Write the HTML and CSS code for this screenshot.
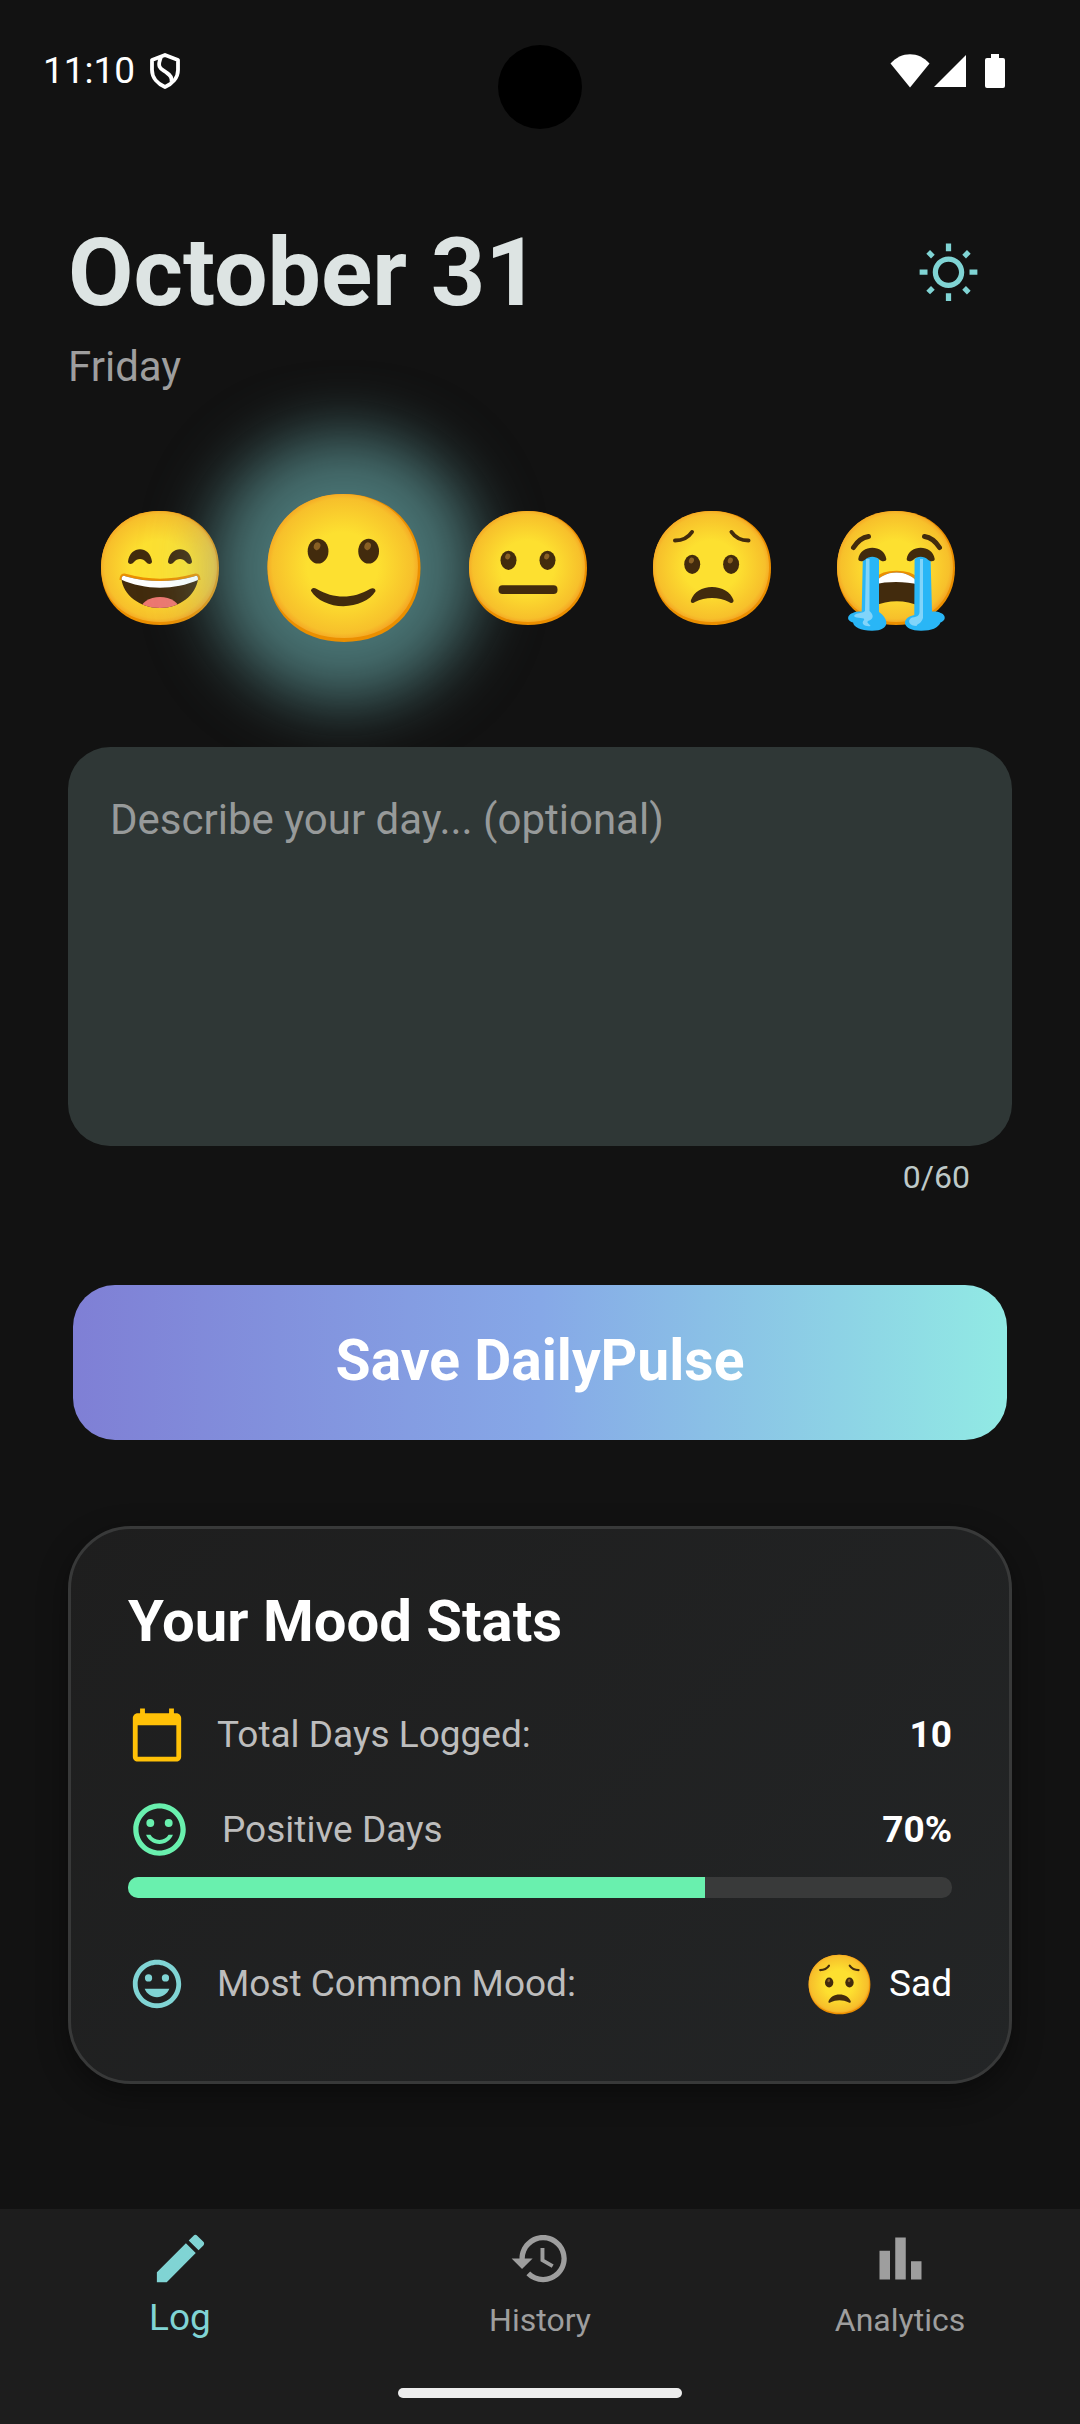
FILE: index.html
```html
<!DOCTYPE html>
<html lang="en">
<head>
<meta charset="utf-8">
<meta name="viewport" content="width=device-width, initial-scale=1">
<title>DailyPulse</title>
<link rel="stylesheet" href="styles.css">
</head>
<body>
<svg class="defs" aria-hidden="true">
  <defs>
    <radialGradient id="skin" cx="0.5" cy="0.5" r="0.52">
      <stop offset="0.45" stop-color="#fde030"/>
      <stop offset="0.9" stop-color="#f7c02b"/>
      <stop offset="1" stop-color="#f4a223"/>
    </radialGradient>
    <g id="head">
      <path fill="#eb8f00" d="M0-57C34-57 59-34 59 0S35 57 0 57S-59 34-59 0S-34-57 0-57z"/>
      <path fill="url(#skin)" d="M-1-57C32-57 57-34 57-1S34 54 0 54S-59 32-59-1S-34-57-1-57z"/>
    </g>
    <g id="eye">
      <ellipse rx="8" ry="9.6" fill="#422b0d"/>
      <ellipse cx="-2" cy="-3.3" rx="2.5" ry="3" fill="#896024" transform="rotate(20)"/>
    </g>
    <path id="arch" fill="#422b0d" d="M-12 5.5C-10-11 10-11 12 5.5C12 8.5 8 8.8 6 6C3 2 -3 2 -6 6C-8 8.8 -12 8.5 -12 5.5z"/>
    <clipPath id="laugh"><path d="M-38.5 11C-38 7 -36 7.500 -34 8.500C-12 14.500 12 14.500 34 8.500C36 7.500 38 7 38 11C36 27 20 40 0 40C-20 40 -37 27 -38.500 11z"/></clipPath>
    <clipPath id="wail"><path d="M-22 18C-16 0 17 0 23 18L23 38C10 31.500 -8 31.500 -22 38z"/></clipPath>
    <symbol id="mood-great" viewBox="-64 -64 128 128">
      <use href="#head"/>
      <use href="#arch" x="-20" y="-12"/>
      <use href="#arch" x="20" y="-12"/>
      <path fill="none" stroke="#eb8f00" stroke-width="5" stroke-linejoin="round" d="M-38 12C-38 7.500 -36 7.500 -34 8.500C-12 14.500 12 14.500 34 8.500C36 7.500 38 7.500 38 12"/>
      <g clip-path="url(#laugh)">
        <rect x="-40" y="4" width="80" height="40" fill="#422b0d"/>
        <ellipse cy="43" rx="20" ry="14" fill="#ed7770"/>
        <path fill="#fff" d="M-40 4H40V11C16 22.500 -16 22.500 -40 11z"/>
      </g>
    </symbol>
    <symbol id="mood-good" viewBox="-64 -64 128 128">
      <use href="#head"/>
      <use href="#eye" x="-20" y="-13"/>
      <use href="#eye" x="19" y="-13"/>
      <path fill="#422b0d" d="M-25.500 17.500C-25 15 -23 15 -21 16.200C-8 24 7 24 20 16.200C22 15 24.500 15.500 24.300 18C20 25 10 29.400 -.5 29.400S-21 25 -25.500 17.500z"/>
    </symbol>
    <symbol id="mood-okay" viewBox="-64 -64 128 128">
      <use href="#head"/>
      <use href="#eye" x="-19.500" y="-7.700"/>
      <use href="#eye" x="19.500" y="-7.700"/>
      <rect x="-29.500" y="17.300" width="59" height="8.800" rx="4" fill="#422b0d"/>
    </symbol>
    <symbol id="mood-sad" viewBox="-64 -64 128 128">
      <use href="#head"/>
      <path fill="none" stroke="#422b0d" stroke-width="4" stroke-linecap="round" d="M-37-27.500C-29.500 -27.500 -24 -30 -20-36M36.500-27.500C29-27.500 23.500-30 19.500-36"/>
      <use href="#eye" x="-19.800" y="-3.700"/>
      <use href="#eye" x="19.100" y="-3.700"/>
      <path fill="#422b0d" d="M-21 32C-18 24 -10 19 0 19S18.500 24 21.500 32C22 35 19 36 17 34C7 28.700 -7 28.700 -17 34C-19 36 -22 35 -21 32z"/>
    </symbol>
    <symbol id="mood-awful" viewBox="-64 -64 128 128">
      <use href="#head"/>
      <path fill="none" stroke="#422b0d" stroke-width="5" stroke-linecap="round" d="M-42.500-20.500C-39-26 -34-30.500 -27.500-31.500M43.500-20.500C40-26 35-30.500 28.500-31.500"/>
      <path fill="none" stroke="#eb8f00" stroke-width="3" d="M-20 11C-12 2 13 2 21 11"/>
      <g clip-path="url(#wail)">
        <rect x="-24" y="0" width="48" height="40" fill="#422b0d"/>
        <path fill="#fff" d="M-24 0H24V17C10 13 -10 13 -24 17z"/>
      </g>
      <path fill="#29b6f6" d="M-33.200-9Q-25-16 -17-9V44C-8 50 -4 62.700 -24 62.700C-36 62.700 -42 59 -43 54.500C-52 52 -48 43 -34.300 43.500z"/>
      <path fill="#29b6f6" d="M18.600-9Q26-16 34.600-9L36 43.500C50 43 52 52 44.500 54.500C42 60 36 62.700 25 62.700C6 62.700 4 50 18.300 47z"/>
      <path fill="#81d4fa" d="M-30-9H-26.500V43C-22 47 -22 51 -28 53C-30 55 -26 56 -25.500 58C-30 59 -36 56 -32 52C-30 49 -40 51 -42 48C-40 44 -34 46 -31 43zM24-9H27V50C25 56 22 55 20.500 58C14 58 10 53 16 49.500C22 49 24 47 23.500 42z"/>
      <use href="#arch" transform="translate(-23.700 -14) scale(1.170 .9)"/>
      <use href="#arch" transform="translate(24.700 -14) scale(1.170 .9)"/>
    </symbol>
  </defs>
</svg>

<header class="status">
  <div class="status-group">
    <time>11:10</time>
    <svg class="shield" viewBox="0 0 30 36" fill="none" stroke="#fff" stroke-width="3.800" stroke-linejoin="round" aria-hidden="true">
      <path d="M15 2L28 7V17C28 25 22 31 15 34C8 31 2 25 2 17V7z"/>
      <path d="M11 4C6 16 12 16 17 20C22 23 22 26 21.500 29"/>
    </svg>
  </div>
  <span class="camera"></span>
  <div class="status-group status-icons">
    <svg width="40" height="34" viewBox="0 0 40 34" fill="#fff" aria-hidden="true"><path d="M20 33.500L.5 9.500C11-3 29-3 39.500 9.500z"/></svg>
    <svg width="32" height="34" viewBox="0 0 32 34" fill="#fff" aria-hidden="true"><path d="M32 1V33H0z"/></svg>
    <svg class="battery" width="20" height="34" viewBox="0 0 20 34" fill="#fff" aria-hidden="true"><path d="M6 0h8v4h4q2 0 2 2v26q0 2-2 2H2q-2 0-2-2V6q0-2 2-2h4z"/></svg>
  </div>
</header>

<main class="page">
  <div class="heading">
    <div>
      <h1>October 31</h1>
      <p class="weekday">Friday</p>
    </div>
    <button class="theme" type="button" aria-label="Switch theme">
      <svg class="icon-lg" viewBox="0 0 24 24" fill="currentColor"><path d="M6.760 4.840l-1.800-1.790-1.410 1.410 1.790 1.790 1.420-1.410zM4 10.500H1v2h3v-2zm9-9.950h-2V3.500h2V.55zm7.450 3.910l-1.410-1.410-1.790 1.790 1.410 1.410 1.790-1.790zm-3.210 13.700l1.790 1.800 1.410-1.410-1.800-1.790-1.400 1.400zM20 10.500v2h3v-2h-3zm-8-5c-3.310 0-6 2.690-6 6s2.690 6 6 6 6-2.690 6-6-2.690-6-6-6zm0 10c-2.210 0-4-1.790-4-4s1.790-4 4-4 4 1.790 4 4-1.790 4-4 4zm-1 6.950h2V19.500h-2v2.950zm-7.450-3.910l1.410 1.410 1.790-1.800-1.410-1.410-1.790 1.800z"/></svg>
    </button>
  </div>

  <div class="moods">
    <button class="mood" type="button" aria-label="Great"><svg viewBox="0 0 128 128"><use href="#mood-great"/></svg></button>
    <button class="mood mood-selected" type="button" aria-label="Good" aria-pressed="true"><svg viewBox="0 0 128 128"><use href="#mood-good"/></svg></button>
    <button class="mood" type="button" aria-label="Okay"><svg viewBox="0 0 128 128"><use href="#mood-okay"/></svg></button>
    <button class="mood" type="button" aria-label="Sad"><svg viewBox="0 0 128 128"><use href="#mood-sad"/></svg></button>
    <button class="mood" type="button" aria-label="Awful"><svg viewBox="0 0 128 128"><use href="#mood-awful"/></svg></button>
  </div>

  <textarea class="note" maxlength="60" aria-label="Describe your day" placeholder="Describe your day... (optional)"></textarea>
  <p class="counter">0/60</p>

  <button class="save" type="button">Save DailyPulse</button>

  <section class="card">
    <h2>Your Mood Stats</h2>
    <div class="stat">
      <svg class="icon-md amber" viewBox="0 0 24 24" fill="currentColor" aria-hidden="true"><path d="M20 3h-1V1h-2v2H7V1H5v2H4c-1.100 0-2 .9-2 2v16c0 1.100.9 2 2 2h16c1.100 0 2-.9 2-2V5c0-1.100-.9-2-2-2zm0 18H4V8h16v13z"/></svg>
      <span class="stat-label">Total Days Logged:</span>
      <strong>10</strong>
    </div>
    <div class="stat stat-positive">
      <svg class="icon-lg green" viewBox="0 0 24 24" fill="currentColor" aria-hidden="true"><circle cx="15.500" cy="9.500" r="1.500"/><circle cx="8.500" cy="9.500" r="1.500"/><path d="M12 16c-1.480 0-2.750-.81-3.450-2H6.880c.8 2.050 2.790 3.500 5.120 3.500s4.320-1.450 5.120-3.500h-1.670c-.7 1.190-1.970 2-3.450 2zm-.01-14C6.470 2 2 6.480 2 12s4.470 10 9.990 10C17.520 22 22 17.520 22 12S17.520 2 11.990 2zM12 20c-4.420 0-8-3.580-8-8s3.580-8 8-8 8 3.580 8 8-3.580 8-8 8z"/></svg>
      <span class="stat-label">Positive Days</span>
      <strong>70%</strong>
    </div>
    <div class="meter" role="progressbar" aria-label="Positive days" aria-valuemin="0" aria-valuemax="100" aria-valuenow="70"><div class="meter-fill" style="width: 70%"></div></div>
    <div class="stat stat-common">
      <svg class="icon-md teal" viewBox="0 0 24 24" fill="currentColor" aria-hidden="true"><circle cx="15.500" cy="9.500" r="1.500"/><circle cx="8.500" cy="9.500" r="1.500"/><path d="M11.990 2C6.470 2 2 6.480 2 12s4.470 10 9.990 10C17.520 22 22 17.520 22 12S17.520 2 11.990 2zM12 20c-4.420 0-8-3.580-8-8s3.580-8 8-8 8 3.580 8 8-3.580 8-8 8zM12 17.500c2.330 0 4.310-1.460 5.110-3.500H6.890c.8 2.040 2.780 3.500 5.110 3.500z"/></svg>
      <span class="stat-label">Most Common Mood:</span>
      <svg class="mood-mini" viewBox="0 0 128 128" aria-hidden="true"><use href="#mood-sad"/></svg>
      <span class="mood-name">Sad</span>
    </div>
  </section>
</main>

<nav class="tabs">
  <a class="tab tab-active" href="#log" aria-current="page">
    <svg class="icon-lg" viewBox="0 0 24 24" fill="currentColor" aria-hidden="true"><path d="M3 17.250V21h3.750L17.810 9.940l-3.750-3.750L3 17.250zM20.710 7.040c.39-.39.39-1.020 0-1.410l-2.340-2.340c-.39-.39-1.020-.39-1.410 0l-1.830 1.830 3.750 3.750 1.830-1.830z"/></svg>
    <span>Log</span>
  </a>
  <a class="tab" href="#history">
    <svg class="icon-lg" viewBox="0 0 24 24" fill="currentColor" aria-hidden="true"><path d="M13 3c-4.970 0-9 4.030-9 9H1l3.890 3.890.07.14L9 12H6c0-3.870 3.130-7 7-7s7 3.130 7 7-3.130 7-7 7c-1.930 0-3.680-.79-4.940-2.060l-1.420 1.420C8.270 19.990 10.510 21 13 21c4.970 0 9-4.030 9-9s-4.030-9-9-9zm-1 5v5l4.280 2.540.72-1.210-3.500-2.080V8H12z"/></svg>
    <span>History</span>
  </a>
  <a class="tab" href="#analytics">
    <svg class="icon-lg" viewBox="0 0 24 24" fill="currentColor" aria-hidden="true"><path d="M4 9h4v11H4zm12 4h4v7h-4zm-6-9h4v16h-4z"/></svg>
    <span>Analytics</span>
  </a>
</nav>
<div class="gesture"><span></span></div>
</body>
</html>
```
FILE: styles.css
```css
* {
  box-sizing: border-box;
}

body {
  margin: 0;
  min-height: 100vh;
  display: flex;
  flex-direction: column;
  background: #121212;
  color: #fff;
  font-family: Roboto, "Liberation Sans", sans-serif;
  font-size: 37px;
  line-height: 44px;
}

h1,
h2,
p {
  margin: 0;
}

button {
  padding: 0;
  border: 0;
  background: none;
  color: inherit;
  font: inherit;
}

svg {
  display: block;
  flex: none;
}

.defs {
  position: absolute;
  width: 0;
  height: 0;
}

.icon-md {
  width: 58px;
  height: 58px;
}

.icon-lg {
  width: 63px;
  height: 63px;
}

.amber {
  color: #ffc107;
}

.green {
  color: #69f0ae;
}

.teal {
  color: #80d4d4;
}

/* System status bar */
.status {
  position: relative;
  display: flex;
  justify-content: space-between;
  align-items: center;
  height: 142px;
  padding: 0 75px 0 43px;
}

.status-group {
  display: flex;
  align-items: center;
  gap: 15px;
}

.status-icons {
  gap: 4px;
}

.battery {
  margin-left: 15px;
}

.shield {
  width: 30px;
  height: 36px;
}

.camera {
  position: absolute;
  top: 45px;
  left: 50%;
  width: 84px;
  height: 84px;
  margin-left: -42px;
  border-radius: 50%;
  background: #000;
}

/* Page content */
.page {
  display: flex;
  flex-direction: column;
  padding: 76px 68px;
}

.heading {
  display: flex;
  justify-content: space-between;
  align-items: flex-start;
}

h1 {
  color: #dde4e3;
  font-size: 95px;
  line-height: 110px;
}

.weekday {
  margin-top: 14px;
  color: #9e9e9e;
  font-size: 42px;
  line-height: 50px;
}

.theme {
  padding: 24px 32px;
  color: #80d4d4;
}

.moods {
  display: grid;
  grid-template-columns: repeat(5, 1fr);
  place-items: center;
  height: 184px;
  margin-top: 84px;
  padding-right: 24px;
}

.mood svg {
  width: 128px;
  height: 128px;
}

.mood-selected {
  width: 140px;
  height: 140px;
  border-radius: 50%;
  box-shadow: 0 0 64px 64px rgba(128, 212, 212, 0.5);
}

.mood-selected svg {
  width: 166px;
  height: 166px;
  margin: -13px;
}

.note {
  height: 399px;
  margin-top: 87px;
  padding: 48px 42px;
  border: 0;
  border-radius: 42px;
  outline: 0;
  resize: none;
  background: #2f3736;
  color: #dde4e3;
  font: inherit;
  font-size: 42px;
  line-height: 50px;
}

.note::placeholder {
  color: #979a9a;
  opacity: 1;
}

.counter {
  margin-top: 12px;
  padding-right: 42px;
  color: #bec9c8;
  font-size: 32px;
  line-height: 38px;
  text-align: right;
}

.save {
  height: 155px;
  margin: 89px 5px 0;
  padding-bottom: 4px;
  border-radius: 42px;
  background: linear-gradient(90deg, #7f7fd5, #86a8e7, #91eae4);
  font-size: 57px;
  font-weight: 700;
}

.card {
  margin-top: 86px;
  padding: 58px 57px 60px;
  border: 3px solid #383939;
  border-radius: 63px;
  background: linear-gradient(135deg, #1e1e1e, #232526);
  box-shadow: 0 10px 30px rgba(0, 0, 0, 0.4);
}

h2 {
  font-size: 58px;
  line-height: 68px;
}

.stat {
  display: flex;
  align-items: center;
  margin-top: 51px;
}

.stat-positive {
  margin-top: 34px;
}

.stat-common {
  height: 74px;
  margin-top: 49px;
}

.stat-label {
  flex: 1;
  margin-left: 31px;
  color: #bdbdbd;
}

.meter {
  height: 21px;
  margin-top: 16px;
  overflow: hidden;
  border-radius: 10px;
  background: #393a3a;
}

.meter-fill {
  height: 100%;
  background: #69f0ae;
}

.mood-mini {
  width: 67px;
  height: 67px;
}

.mood-name {
  margin-left: 16px;
}

/* Bottom navigation */
.tabs {
  display: grid;
  grid-template-columns: repeat(3, 1fr);
  margin-top: auto;
  padding-top: 18px;
  background: #1d1d1d;
}

.tab {
  display: flex;
  flex-direction: column;
  align-items: center;
  gap: 5px;
  color: #9e9e9e;
  font-size: 32px;
  line-height: 50px;
  text-decoration: none;
}

.tab-active {
  color: #80d4d4;
  font-size: 37px;
  line-height: 46px;
}

.gesture {
  padding: 43px 0 26px;
  background: #1d1d1d;
}

.gesture span {
  display: block;
  width: 284px;
  height: 10px;
  margin: 0 auto;
  border-radius: 5px;
  background: #ededed;
}
```
